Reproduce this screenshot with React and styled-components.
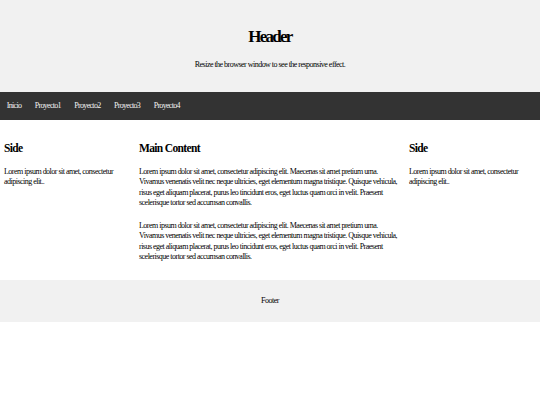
import styled, { createGlobalStyle } from "styled-components";

const GlobalStyle = createGlobalStyle`
  * {
    box-sizing: border-box;
  }

  body {
    margin: 0;
    background: #fff;
    color: #000;
    font-family: "Liberation Serif", "Times New Roman", serif;
  }
`;

const links = ["Inicio", "Proyecto1", "Proyecto2", "Proyecto3", "Proyecto4"];

const lorem =
  "Lorem ipsum dolor sit amet, consectetur adipiscing elit. Maecenas sit amet pretium urna. Vivamus venenatis velit nec neque ultricies, eget elementum magna tristique. Quisque vehicula, risus eget aliquam placerat, purus leo tincidunt eros, eget luctus quam orci in velit. Praesent scelerisque tortor sed accumsan convallis.";

const short = "Lorem ipsum dolor sit amet, consectetur adipiscing elit..";

export default function App() {
  return (
    <>
      <GlobalStyle />
      <Header>
        <Title>Header</Title>
        <Lead>Resize the browser window to see the responsive effect.</Lead>
      </Header>

      <TopNav>
        {links.map((link) => (
          <NavLink key={link} href="#">
            {link}
          </NavLink>
        ))}
      </TopNav>

      <Row>
        <Column $width="25%">
          <Heading>Side</Heading>
          <Text>{short}</Text>
        </Column>
        <Column $width="50%">
          <Heading>Main Content</Heading>
          <Text>{lorem}</Text>
          <Text>{lorem}</Text>
        </Column>
        <Column $width="25%">
          <Heading>Side</Heading>
          <Text>{short}</Text>
        </Column>
      </Row>

      <Footer>
        <Text as="div">Footer</Text>
      </Footer>
    </>
  );
}

const Header = styled.header`
  background: #f1f1f1;
  padding: 26px 10px 22px;
  text-align: center;
`;

const Title = styled.h1`
  margin: 0 0 13px;
  font-size: 17px;
  line-height: 21px;
  font-weight: bold;
  letter-spacing: -1.75px;
`;

const Lead = styled.p`
  margin: 0;
  font-size: 8px;
  line-height: 10px;
  letter-spacing: -0.52px;
`;

const TopNav = styled.nav`
  display: flex;
  height: 28px;
  background: #333;
`;

const NavLink = styled.a`
  display: block;
  padding: 0 6.75px;
  color: #f2f2f2;
  font-size: 8px;
  line-height: 28px;
  letter-spacing: -0.7px;
  text-decoration: none;

  &:hover {
    background: #ddd;
    color: #000;
  }
`;

const Row = styled.main`
  display: flex;
  align-items: flex-start;
`;

const Column = styled.section`
  width: ${(props) => props.$width};
  padding: 4px 4px 5px;
`;

const Heading = styled.h2`
  margin: 17px 0 12px;
  font-size: 11.5px;
  line-height: 14px;
  font-weight: bold;
  letter-spacing: -0.65px;
`;

const Text = styled.p`
  margin: 0 0 13px;
  font-size: 8px;
  line-height: 10.3px;
  letter-spacing: -0.52px;
`;

const Footer = styled.footer`
  background: #f1f1f1;
  padding: 16px 10px;
  text-align: center;

  div {
    margin: 0;
    line-height: 10px;
  }
`;
